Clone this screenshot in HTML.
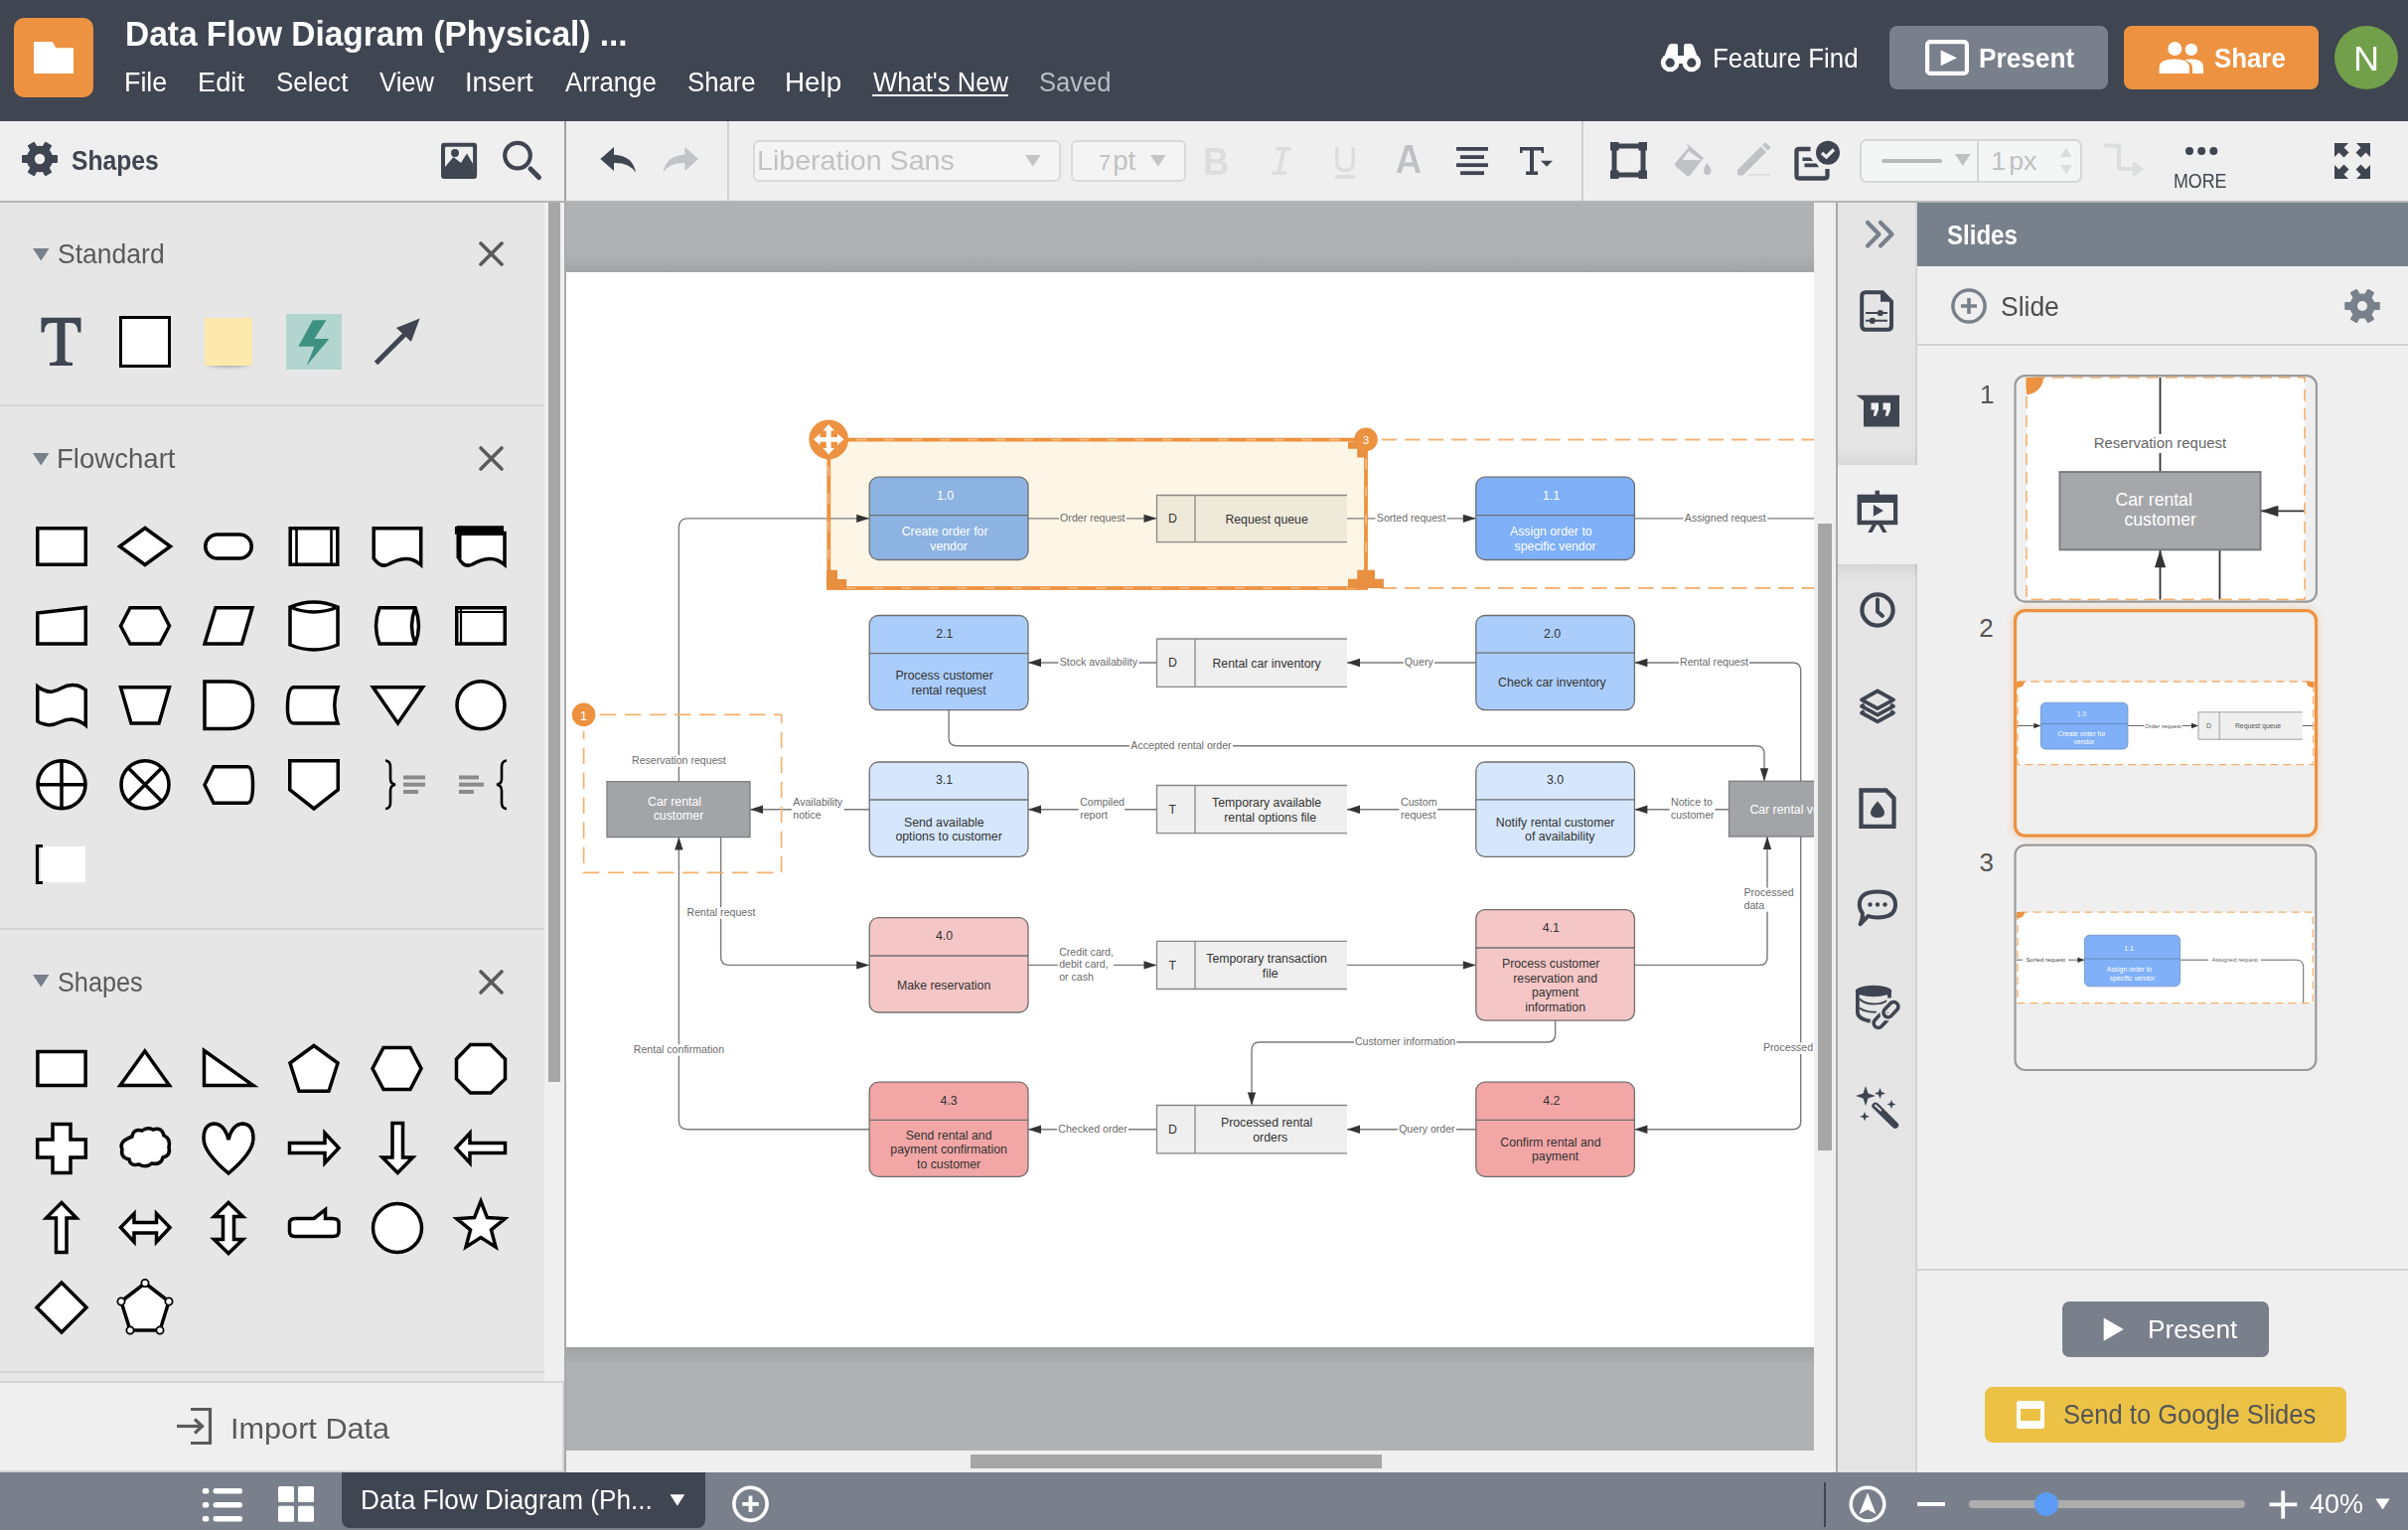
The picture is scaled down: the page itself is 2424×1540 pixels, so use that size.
<!DOCTYPE html>
<html><head><meta charset="utf-8">
<style>
*{box-sizing:border-box;margin:0;padding:0}
html,body{width:2424px;height:1540px;overflow:hidden;background:#efefef;font-family:"Liberation Sans",sans-serif;position:relative}
.a{position:absolute}
.t{position:absolute;white-space:nowrap;line-height:1;transform-origin:0 0;font-family:"Liberation Sans",sans-serif}
svg{overflow:visible}
</style></head><body>
<div class="a" style="left:0px;top:0px;width:2424px;height:122px;background:#3f4551;"></div><div class="a" style="left:14px;top:18px;width:80px;height:80px;background:#ed9240;border-radius:10px"></div><svg class="a" style="left:34px;top:41px;" width="41" height="34" viewBox="0 0 41 34"><path d="M0 0.9H18.8L22.3 7.2H40V32.9H0Z" fill="#fff"/></svg><div class="t" style="left:125.73px;top:16.86px;font-size:34.30px;color:#fff;font-weight:bold;transform:scaleX(0.9753);">Data Flow Diagram (Physical) ...</div><div class="t" style="left:125.05px;top:68.32px;font-size:28.20px;color:#fff;transform:scaleX(0.9528);">File</div><div class="t" style="left:199.22px;top:68.32px;font-size:28.20px;color:#fff;transform:scaleX(0.9673);">Edit</div><div class="t" style="left:278.03px;top:68.32px;font-size:28.20px;color:#fff;transform:scaleX(0.9239);">Select</div><div class="t" style="left:381.87px;top:68.32px;font-size:28.20px;color:#fff;transform:scaleX(0.9093);">View</div><div class="t" style="left:468.23px;top:68.32px;font-size:28.20px;color:#fff;transform:scaleX(0.9731);">Insert</div><div class="t" style="left:568.90px;top:68.32px;font-size:28.20px;color:#fff;transform:scaleX(0.9153);">Arrange</div><div class="t" style="left:691.54px;top:68.32px;font-size:28.20px;color:#fff;transform:scaleX(0.9130);">Share</div><div class="t" style="left:789.78px;top:68.32px;font-size:28.20px;color:#fff;transform:scaleX(0.9859);">Help</div><div class="t" style="left:878.57px;top:68.32px;font-size:28.20px;color:#fff;transform:scaleX(0.9093);">What&#x27;s New</div><div class="a" style="left:878px;top:95px;width:137px;height:2px;background:#fff;"></div><div class="t" style="left:1046.35px;top:68.32px;font-size:28.20px;color:#b9bdc3;transform:scaleX(0.9083);">Saved</div><svg class="a" style="left:1672px;top:44px;" width="40" height="29" viewBox="0 0 40 29"><g fill="#fff">
<path d="M3 14 L7 3 Q8 0 11 0 H15 Q17 0 17 3 V12 H23 V3 Q23 0 25 0 H29 Q32 0 33 3 L37 14 Z"/>
<circle cx="9.2" cy="19" r="9.3"/><circle cx="30.8" cy="19" r="9.3"/>
<rect x="14" y="14" width="12" height="6"/></g>
<g fill="#3f4551"><circle cx="9.2" cy="19.2" r="4.6"/><circle cx="30.8" cy="19.2" r="4.6"/></g></svg><div class="t" style="left:1724.33px;top:44.63px;font-size:27.60px;color:#fff;transform:scaleX(0.9371);">Feature Find</div><div class="a" style="left:1902px;top:26px;width:220px;height:64px;background:#79808b;border-radius:8px"></div><svg class="a" style="left:1938px;top:40px;" width="44" height="36" viewBox="0 0 44 36"><rect x="2.1" y="2.1" width="39.8" height="31.8" rx="3" fill="none" stroke="#fff" stroke-width="4.2"/><path d="M15.7 10.4 L32 18.3 L15.7 26.3Z" fill="#fff"/></svg><div class="t" style="left:1992.10px;top:45.19px;font-size:27.30px;color:#fff;font-weight:bold;transform:scaleX(0.9601);">Present</div><div class="a" style="left:2138px;top:26px;width:196px;height:64px;background:#ed9240;border-radius:8px"></div><svg class="a" style="left:2173px;top:41px;" width="46" height="34" viewBox="0 0 46 34"><g fill="#fff"><circle cx="16.3" cy="8" r="7"/><circle cx="32.9" cy="8.9" r="6.2"/>
<path d="M0.6 33 V27 Q0.6 18.6 16 18.6 Q30.5 18.6 31 27 V33Z"/>
<path d="M26 19.2 Q29 18.6 33 18.6 Q45 18.6 45 27 V33 H34 V27 Q34 22 26 19.2Z"/></g></svg><div class="t" style="left:2228.53px;top:45.19px;font-size:27.30px;color:#fff;font-weight:bold;transform:scaleX(0.9458);">Share</div><div class="a" style="left:2350px;top:26px;width:64px;height:64px;border-radius:50%;background:#72a04a"></div><div class="t" style="left:2368.91px;top:42.13px;font-size:34.80px;color:#fff;transform:scaleX(1.0365);">N</div><div class="a" style="left:0px;top:122px;width:2424px;height:80px;background:#efefef;"></div><div class="a" style="left:0px;top:202px;width:2424px;height:2px;background:#b5b5b5;"></div><svg class="a" style="left:0px;top:122px;" width="80" height="80" viewBox="0 0 80 80"><g transform="translate(40,38)" fill="#3f4551"><rect x="-4.0" y="-18" width="8" height="36" rx="1" transform="rotate(90.0)"/><rect x="-4.0" y="-18" width="8" height="36" rx="1" transform="rotate(150.0)"/><rect x="-4.0" y="-18" width="8" height="36" rx="1" transform="rotate(210.0)"/><circle r="13.2"/><circle r="5.2" fill="#efefef"/></g></svg><div class="t" style="left:72.26px;top:148.29px;font-size:28.00px;color:#3f4551;font-weight:bold;transform:scaleX(0.8813);">Shapes</div><svg class="a" style="left:444px;top:143px;" width="37" height="37" viewBox="0 0 37 37"><rect x="0" y="0.7" width="36.1" height="36.4" rx="3" fill="#3f4551"/>
<rect x="4" y="4.7" width="28.1" height="26" rx="1" fill="#efefef"/>
<circle cx="14" cy="11" r="4" fill="#3f4551"/>
<path d="M4 25 L12.5 15 L20 21 L26 11.5 L32.1 22 V33 H4Z" fill="#3f4551"/></svg><svg class="a" style="left:504px;top:140px;" width="44" height="44" viewBox="0 0 44 44"><circle cx="17" cy="16.6" r="12.8" fill="none" stroke="#3f4551" stroke-width="4.2"/><line x1="30" y1="30" x2="38.5" y2="38.5" stroke="#3f4551" stroke-width="5" stroke-linecap="round"/></svg><div class="a" style="left:568px;top:122px;width:2px;height:80px;background:#a2a2a2;"></div><svg class="a" style="left:604px;top:148px;" width="37" height="27" viewBox="0 0 37 27"><path d="M0.4 12 L14 0 V7.8 Q33 8.5 36 25.9 Q30 15.6 14 16 V24Z" fill="#3f4551"/></svg><svg class="a" style="left:667px;top:148px;" width="37" height="27" viewBox="0 0 37 27"><g transform="translate(36.4,0) scale(-1,1)"><path d="M0.4 12 L14 0 V7.8 Q33 8.5 36 25.9 Q30 15.6 14 16 V24Z" fill="#c1c3c7"/></g></svg><div class="a" style="left:732px;top:122px;width:2px;height:80px;background:#d0d0d0;"></div><div class="a" style="left:758px;top:141px;width:310px;height:42px;background:#f4f4f4;border:2px solid #d9d9d9;border-radius:6px"></div><div class="t" style="left:761.71px;top:146.87px;font-size:28.50px;color:#c2c2c2;transform:scaleX(1.0036);">Liberation Sans</div><svg class="a" style="left:1032px;top:156px;" width="16" height="12" viewBox="0 0 16 12"><path d="M0 0H15.5L7.75 11.8Z" fill="#c4c4c4"/></svg><div class="a" style="left:1078px;top:141px;width:116px;height:42px;background:#f4f4f4;border:2px solid #d9d9d9;border-radius:6px"></div><div class="t" style="left:1105.90px;top:152.87px;font-size:22.00px;color:#c2c2c2;">7</div><div class="t" style="left:1120.21px;top:148.22px;font-size:27.50px;color:#c2c2c2;">pt</div><svg class="a" style="left:1158px;top:156px;" width="16" height="12" viewBox="0 0 16 12"><path d="M0 0H15.5L7.75 11.8Z" fill="#c4c4c4"/></svg><div class="t" style="left:1211.43px;top:142.98px;font-size:39.00px;color:#dcdddd;font-weight:bold;transform:scaleX(0.9332);">B</div><svg class="a" style="left:1280px;top:148px;" width="20" height="28" viewBox="0 0 20 28"><path d="M4.5 0H19.8V3.5H14.2L9.5 24.5H15V28H0V24.5H5.4L10.1 3.5H4.5Z" fill="#dcdddd"/></svg><svg class="a" style="left:1344px;top:148px;" width="21" height="32" viewBox="0 0 21 32"><path d="M1.7 0V14.5Q1.7 23.5 10 23.5Q18.3 23.5 18.3 14.5V0" fill="none" stroke="#dcdddd" stroke-width="3.4"/><rect x="0" y="28" width="20" height="3.7" fill="#dcdddd"/></svg><svg class="a" style="left:1406px;top:146px;" width="24" height="28" viewBox="0 0 24 28"><path d="M8.6 0H15.4L24 28H19.2L17.3 21.5H6.7L4.8 28H0ZM12 4.5L7.9 17.4H16.1Z" fill="#bfc1c5"/></svg><svg class="a" style="left:1466px;top:148px;" width="33" height="29" viewBox="0 0 33 29"><g fill="#3f4551"><rect x="0" y="0" width="32" height="3.8"/><rect x="4" y="8.2" width="24" height="3.8"/><rect x="0" y="16.3" width="32" height="3.8"/><rect x="4" y="24.3" width="24" height="3.8"/></g></svg><svg class="a" style="left:1530px;top:148px;" width="34" height="29" viewBox="0 0 34 29"><path d="M0 0H24V6H21.5V3.5H14V24.5H18V28H6V24.5H10V3.5H2.5V6H0Z" fill="#3f4551"/><path d="M21 13.8H33L27 19.8Z" fill="#3f4551"/></svg><div class="a" style="left:1592px;top:122px;width:2px;height:80px;background:#d0d0d0;"></div><svg class="a" style="left:1621px;top:143px;" width="38" height="38" viewBox="0 0 38 38"><rect x="4" y="4" width="29" height="29" fill="none" stroke="#3f4551" stroke-width="5"/><g fill="#3f4551"><rect x="0" y="0" width="8.5" height="8.5"/><rect x="28.5" y="0" width="8.5" height="8.5"/><rect x="0" y="28.5" width="8.5" height="8.5"/><rect x="28.5" y="28.5" width="8.5" height="8.5"/></g></svg><svg class="a" style="left:1686px;top:144px;" width="38" height="35" viewBox="0 0 38 35"><path d="M12 0.5 L29 15 L15.5 32 Q14 34.5 11.5 32.5 L1 23.5 Q-0.5 21.5 1 19.5 L13.5 4.5Z" fill="#bfc1c5"/><path d="M7.5 17 L26.5 17.3 L14 8Z" fill="#efefef"/><path d="M32 20 Q37 26 36.5 28.5 Q36 32 32.5 32 Q29.5 32 29 28.5 Q29 26 32 20Z" fill="#bfc1c5"/></svg><svg class="a" style="left:1749px;top:145px;" width="34" height="32" viewBox="0 0 34 32"><path d="M0 26 L23.5 2.5 L29 8 L5.5 31.5 H0Z" fill="#bfc1c5"/><path d="M25 1 L27 -1 Q28 -2 29 -1 L32.5 2.5 Q33.5 3.5 32.5 4.5 L30.5 6.5Z" fill="#bfc1c5"/><rect x="11" y="30" width="22" height="1.8" fill="#dcdddd"/></svg><svg class="a" style="left:1807px;top:141px;" width="46" height="40" viewBox="0 0 46 40"><path d="M15.5 9 H4 Q1.5 9 1.5 11.5 V36 Q1.5 38.5 4 38.5 H30 Q32.5 38.5 32.5 36 V29" fill="none" stroke="#3f4551" stroke-width="4.3"/><g fill="#3f4551"><path d="M7.5 17.5H15.5L18 21H7.5Z"/><path d="M9.5 23.6H21.5L24 27.3H9.5Z"/></g><circle cx="33" cy="12.8" r="12" fill="#3f4551"/><path d="M27 13 L31.5 17 L39 9.5" fill="none" stroke="#efefef" stroke-width="3.4"/></svg><div class="a" style="left:1872px;top:140px;width:224px;height:44px;background:#f4f5f5;border:2px solid #d6d6d6;border-radius:7px"></div><div class="a" style="left:1990px;top:142px;width:2px;height:40px;background:#d6d6d6;"></div><div class="a" style="left:1894px;top:159.5px;width:61px;height:4px;background:#b9b9b9;border-radius:2px"></div><svg class="a" style="left:1968px;top:155px;" width="16" height="13" viewBox="0 0 16 13"><path d="M0 0H15.7L7.85 12Z" fill="#c0c0c0"/></svg><div class="t" style="left:2004.20px;top:149.19px;font-size:26.70px;color:#c0c0c0;">1</div><div class="t" style="left:2022.26px;top:149.19px;font-size:26.70px;color:#c0c0c0;">px</div><svg class="a" style="left:2074px;top:148px;" width="12" height="28" viewBox="0 0 12 28"><path d="M0 10 L6 0.4 L11.5 10Z M0 18 H11.5 L6 27.4Z" fill="#dcdddd"/></svg><svg class="a" style="left:2118px;top:144px;" width="41" height="34" viewBox="0 0 41 34"><path d="M0 2.5 H13 Q15 2.5 15 4.5 V24 Q15 26 17 26 H31" fill="none" stroke="#dcdddd" stroke-width="4"/><path d="M29 18 L40.5 26 L29 34Z" fill="#dcdddd"/></svg><svg class="a" style="left:2199px;top:147px;" width="34" height="10" viewBox="0 0 34 10"><g fill="#3f4551"><circle cx="5" cy="5" r="4"/><circle cx="17.2" cy="5" r="4"/><circle cx="29.3" cy="5" r="4"/></g></svg><div class="t" style="left:2187.77px;top:173.37px;font-size:19.40px;color:#3f4551;transform:scaleX(0.9182);">MORE</div><svg class="a" style="left:2350px;top:144px;" width="37" height="37" viewBox="0 0 37 37"><g fill="#3f4551"><path d="M0 0H14L9.5 4.5L14.5 9.5L9.5 14.5L4.5 9.5L0 14Z"/><path d="M36 0H22L26.5 4.5L21.5 9.5L26.5 14.5L31.5 9.5L36 14Z"/><path d="M0 36H14L9.5 31.5L14.5 26.5L9.5 21.5L4.5 26.5L0 22Z"/><path d="M36 36H22L26.5 31.5L21.5 26.5L26.5 21.5L31.5 26.5L36 22Z"/></g></svg><div class="a" style="left:0px;top:204px;width:548px;height:1187px;background:#e6e6e6;"></div><div class="a" style="left:548px;top:204px;width:20px;height:1187px;background:#efefef;"></div><div class="a" style="left:552px;top:204px;width:12px;height:885px;background:#a6a6a6;"></div><div class="a" style="left:568px;top:204px;width:2px;height:1278px;background:#a9a9a9;"></div><div class="a" style="left:0px;top:1390px;width:568px;height:92px;background:#efefef;border-top:2px solid #d5d5d5;border-right:2px solid #d5d5d5;border-bottom:2px solid #d5d5d5"></div><div class="a" style="left:0px;top:407px;width:548px;height:2px;background:#d3d3d3;"></div><div class="a" style="left:0px;top:934px;width:548px;height:2px;background:#d3d3d3;"></div><div class="a" style="left:0px;top:1380px;width:548px;height:2px;background:#d3d3d3;"></div><svg class="a" style="left:33px;top:249.8px;" width="17" height="13" viewBox="0 0 17 13"><path d="M0 0H16.5L8.25 12.5Z" fill="#78808b"/></svg><div class="t" style="left:57.81px;top:242.09px;font-size:28.00px;color:#5a5a5a;transform:scaleX(0.9476);">Standard</div><svg class="a" style="left:482px;top:243px;" width="25" height="25" viewBox="0 0 25 25"><path d="M2 2L23 23M23 2L2 23" stroke="#5a5a5a" stroke-width="3.6" stroke-linecap="round"/></svg><svg class="a" style="left:33px;top:455.5px;" width="17" height="13" viewBox="0 0 17 13"><path d="M0 0H16.5L8.25 12.5Z" fill="#78808b"/></svg><div class="t" style="left:56.80px;top:447.99px;font-size:28.00px;color:#5a5a5a;transform:scaleX(0.9844);">Flowchart</div><svg class="a" style="left:482px;top:449px;" width="25" height="25" viewBox="0 0 25 25"><path d="M2 2L23 23M23 2L2 23" stroke="#5a5a5a" stroke-width="3.6" stroke-linecap="round"/></svg><svg class="a" style="left:33px;top:981.3px;" width="17" height="13" viewBox="0 0 17 13"><path d="M0 0H16.5L8.25 12.5Z" fill="#78808b"/></svg><div class="t" style="left:57.86px;top:974.89px;font-size:28.00px;color:#5a5a5a;transform:scaleX(0.9031);">Shapes</div><svg class="a" style="left:482px;top:976px;" width="25" height="25" viewBox="0 0 25 25"><path d="M2 2L23 23M23 2L2 23" stroke="#5a5a5a" stroke-width="3.6" stroke-linecap="round"/></svg><svg class="a" style="left:41px;top:319px;" width="42" height="50" viewBox="0 0 42 50"><path d="M0.5 0.7H40.5V15.5H37.5Q37.5 6 30 6H24.5V43Q24.5 46 32 46V49H9V46Q16.5 46 16.5 43V6H11Q3.5 6 3.5 15.5H0.5Z" fill="#3f4551"/></svg><div class="a" style="left:120px;top:318px;width:52px;height:52px;background:#fff;border:3.8px solid #000"></div><div class="a" style="left:209px;top:362px;width:42px;height:7px;border-radius:50%;background:rgba(0,0,0,0.35);filter:blur(2px)"></div><div class="a" style="left:206px;top:320px;width:48px;height:48px;background:#fde9ab;"></div><div class="a" style="left:288px;top:316px;width:56px;height:56px;background:#b2d5d0;"></div><svg class="a" style="left:288px;top:316px;" width="56" height="56" viewBox="0 0 56 56"><path d="M26.8 6.2H40.4L28.5 25H43.4L20.7 52L28.5 32.8H12.3Z" fill="#3e9181"/></svg><svg class="a" style="left:370px;top:315px;" width="56" height="56" viewBox="0 0 56 56"><path d="M8.5 50.4 L38 21" stroke="#3f4551" stroke-width="5"/><path d="M52.6 5.6 L28.9 15 L43.9 29Z" fill="#3f4551"/></svg><svg class="a" style="left:0px;top:500px;" width="548" height="880" viewBox="0 500 548 880"><path d="M37.75 531.75H86.25V568.25H37.75Z" fill="#fff" stroke="#000" stroke-width="3.5" stroke-linejoin="miter" /><path d="M146 531.5L171.5 550L146 568.5L120.5 550Z" fill="#fff" stroke="#000" stroke-width="3.5" stroke-linejoin="miter" /><rect x="206.75" y="538" width="46.5" height="24" rx="12" fill="#fff" stroke="#000" stroke-width="3.5" stroke-linejoin="miter"/><path d="M292.2 531.75H339.8V568.25H292.2Z" fill="#fff" stroke="#000" stroke-width="3.5" stroke-linejoin="miter" /><path d="M298.5 532V568M333.5 532V568" stroke="#000" stroke-width="2.6"/><path d="M376.2 531.75H423.7V568.5Q416 562 408.3 562.5Q400 563 391 568Q383 572 376.2 562Z" fill="#fff" stroke="#000" stroke-width="3.5" stroke-linejoin="miter" /><path d="M459.7 531.7H504.5V536.5H508V568.5Q500.5 562 492.5 562.5Q484 563 475.5 568Q467 572 462 562V536H459.7Z" fill="#fff" stroke="#000" stroke-width="3.5"/><path d="M459.7 531.7H504.5V536.5H462V562" fill="none" stroke="#000" stroke-width="5"/><path d="M37.75 617L86.25 611.5V648H37.75Z" fill="#fff" stroke="#000" stroke-width="3.5" stroke-linejoin="miter" /><path d="M131 611.75H161L170.5 630L161 648H131L121.5 630Z" fill="#fff" stroke="#000" stroke-width="3.5" stroke-linejoin="miter" /><path d="M217 611.75H254L243.5 648H206Z" fill="#fff" stroke="#000" stroke-width="3.5" stroke-linejoin="miter" /><path d="M292 611Q316 601 340 611V649Q316 659 292 649Z" fill="#fff" stroke="#000" stroke-width="3.5" stroke-linejoin="miter" /><path d="M292 611Q316 621 340 611" fill="none" stroke="#000" stroke-width="3.5"/><path d="M382 611.75H418Q425 630 418 648H382Q375 630 382 611.75Z" fill="#fff" stroke="#000" stroke-width="3.5" stroke-linejoin="miter" /><path d="M418 611.75Q411 630 418 648" fill="none" stroke="#000" stroke-width="3.5"/><path d="M459.75 611.75H508.25V648H459.75Z" fill="#fff" stroke="#000" stroke-width="3.5" stroke-linejoin="miter" /><path d="M464 612V648M460 616H508" stroke="#000" stroke-width="2.2"/><path d="M37.75 691Q46 697 53 696Q58 695 62 692.5Q70 688 78 690Q83 691.5 86.25 694.5V730Q80 725 72 724Q66 724 60 727Q52 731 45 729Q40 728 37.75 726Z" fill="#fff" stroke="#000" stroke-width="3.5" stroke-linejoin="miter" /><path d="M121.5 691.75H170.5L160 728H132Z" fill="#fff" stroke="#000" stroke-width="3.5" stroke-linejoin="miter" /><path d="M206 686H230Q254.5 686 254.5 709.75Q254.5 733.5 230 733.5H206Z" fill="#fff" stroke="#000" stroke-width="3.5" stroke-linejoin="miter" /><path d="M296 691.75H340Q333.5 710 340 728H296Q289 728 289.5 710Q290 691.75 296 691.75Z" fill="#fff" stroke="#000" stroke-width="3.5" stroke-linejoin="miter" /><path d="M375.5 691.75H425.5L400.5 728Z" fill="#fff" stroke="#000" stroke-width="3.5" stroke-linejoin="miter" /><circle cx="484" cy="709.75" r="24" fill="#fff" stroke="#000" stroke-width="3.5" stroke-linejoin="miter"/><circle cx="62" cy="789.75" r="24" fill="#fff" stroke="#000" stroke-width="3.5" stroke-linejoin="miter"/><path d="M62 766V814M38 789.75H86" stroke="#000" stroke-width="3.5"/><circle cx="146" cy="789.75" r="24" fill="#fff" stroke="#000" stroke-width="3.5" stroke-linejoin="miter"/><path d="M129 772.8L163 806.7M163 772.8L129 806.7" stroke="#000" stroke-width="3.5"/><path d="M206 790L215 771.75H249Q254.5 771.75 254.5 790Q254.5 808.25 249 808.25H215Z" fill="#fff" stroke="#000" stroke-width="3.5" stroke-linejoin="miter" /><path d="M291.75 765.75H340.25V795L316 814L291.75 795Z" fill="#fff" stroke="#000" stroke-width="3.5" stroke-linejoin="miter" /><path d="M388 765.5Q393 766 393 772V784Q393 789 398 789.75Q393 790.5 393 796V808Q393 814 388 814" fill="none" stroke="#000" stroke-width="2.6"/><g fill="#8b8b8b"><rect x="406" y="780.5" width="22" height="4"/><rect x="406" y="787.7" width="22" height="4"/><rect x="406" y="795" width="15" height="4"/></g><path d="M510 765.5Q505 766 505 772V784Q505 789 500 789.75Q505 790.5 505 796V808Q505 814 510 814" fill="none" stroke="#000" stroke-width="2.6"/><g fill="#8b8b8b"><rect x="462" y="780.5" width="20" height="4"/><rect x="462" y="787.7" width="25" height="4"/><rect x="462" y="795" width="15" height="4"/></g><rect x="41" y="852" width="45" height="36" fill="#fff"/><path d="M43 851.5H37.5V888.5H43" fill="none" stroke="#000" stroke-width="3.2"/><path d="M37.9 1058.5H86.1V1092.5H37.9Z" fill="#fff" stroke="#000" stroke-width="3.5" stroke-linejoin="miter" /><path d="M145.8 1058L170.5 1092.6H121Z" fill="#fff" stroke="#000" stroke-width="3.5" stroke-linejoin="miter" /><path d="M205.5 1057.5V1092.6H255Z" fill="#fff" stroke="#000" stroke-width="3.5" stroke-linejoin="miter" /><path d="M316 1052.5L340 1070L331 1098.3H301L292 1070Z" fill="#fff" stroke="#000" stroke-width="3.5" stroke-linejoin="miter" /><path d="M386 1054.5H413L424 1075.5L413 1096.5H386L375 1075.5Z" fill="#fff" stroke="#000" stroke-width="3.5" stroke-linejoin="miter" /><path d="M473.5 1051.5H494L508.5 1066V1086L494 1100H473.5L459.5 1086V1066Z" fill="#fff" stroke="#000" stroke-width="3.5" stroke-linejoin="miter" /><path d="M53 1131.5H71V1147H86.3V1165H71V1180.5H53V1165H37.7V1147H53Z" fill="#fff" stroke="#000" stroke-width="3.5" stroke-linejoin="miter" /><path d="M133 1144Q134 1136 143 1138Q148 1134 154 1137Q163 1134 165 1143Q172 1146 170 1155Q172 1163 164 1165Q162 1173 153 1171Q147 1176 140 1172Q131 1174 130 1167Q121 1165 123 1157Q119 1149 133 1144Z" fill="#fff" stroke="#000" stroke-width="3.5" stroke-linejoin="miter" /><path d="M230 1147Q226 1131 215 1131Q205 1132 205 1146Q205 1160 230 1181Q255 1160 255 1146Q255 1132 245 1131Q234 1131 230 1147Z" fill="#fff" stroke="#000" stroke-width="3.5" stroke-linejoin="miter" /><path d="M291.5 1150.5H327V1140.5L341 1155.5L327 1170.5V1160.5H291.5Z" fill="#fff" stroke="#000" stroke-width="3.5" stroke-linejoin="miter" /><path d="M395 1130.5H405.5V1165H415.5L400.3 1180.5L385 1165H395Z" fill="#fff" stroke="#000" stroke-width="3.5" stroke-linejoin="miter" /><path d="M508.5 1150.5H473V1140.5L459 1155.5L473 1170.5V1160.5H508.5Z" fill="#fff" stroke="#000" stroke-width="3.5" stroke-linejoin="miter" /><path d="M56.5 1260.5H67V1226H77L62 1210.5L46.5 1226H56.5Z" fill="#fff" stroke="#000" stroke-width="3.5" stroke-linejoin="miter" /><path d="M121.5 1235.5L135 1221.5V1230.5H157.5V1221.5L171 1235.5L157.5 1250V1241H135V1250Z" fill="#fff" stroke="#000" stroke-width="3.5" stroke-linejoin="miter" /><path d="M230 1210.5L244.5 1224.5H235.5V1247.5H244.5L230 1261.5L215.5 1247.5H224.5V1224.5H215.5Z" fill="#fff" stroke="#000" stroke-width="3.5" stroke-linejoin="miter" /><path d="M297 1226.5H316L327.5 1217.5V1226.5H335Q341 1226.5 341 1231.5V1239.5Q341 1244.5 335 1244.5H297Q291.5 1244.5 291.5 1239.5V1231.5Q291.5 1226.5 297 1226.5Z" fill="#fff" stroke="#000" stroke-width="3.5" stroke-linejoin="miter" /><circle cx="400" cy="1236" r="24.5" fill="#fff" stroke="#000" stroke-width="3.5" stroke-linejoin="miter"/><path d="M484.00 1209.00L490.47 1225.60L508.25 1226.62L494.46 1237.90L498.99 1255.13L484.00 1245.50L469.01 1255.13L473.54 1237.90L459.75 1226.62L477.53 1225.60Z" fill="#fff" stroke="#000" stroke-width="3.5" stroke-linejoin="miter" /><path d="M62 1291L87 1316L62 1341L37 1316Z" fill="#fff" stroke="#000" stroke-width="3.5" stroke-linejoin="miter" /><path d="M146 1291.5L170 1310L161 1339L131 1339L122 1310Z" fill="#fff" stroke="#000" stroke-width="3.5" stroke-linejoin="miter" stroke-width="3"/><circle cx="146" cy="1291.5" r="3.6" fill="#fff" stroke="#000" stroke-width="1.8"/><circle cx="170" cy="1310" r="3.6" fill="#fff" stroke="#000" stroke-width="1.8"/><circle cx="161" cy="1339" r="3.6" fill="#fff" stroke="#000" stroke-width="1.8"/><circle cx="131" cy="1339" r="3.6" fill="#fff" stroke="#000" stroke-width="1.8"/><circle cx="122" cy="1310" r="3.6" fill="#fff" stroke="#000" stroke-width="1.8"/></svg><svg class="a" style="left:177px;top:1417px;" width="38" height="38" viewBox="0 0 38 38"><path d="M15 1.5H34.5V35.5H15" fill="none" stroke="#5a5a5a" stroke-width="3.2"/><path d="M1 18.5H24" stroke="#5a5a5a" stroke-width="3.2"/><path d="M19 11.5L26.5 18.5L19 25.5" fill="none" stroke="#5a5a5a" stroke-width="3.2"/></svg><div class="t" style="left:231.64px;top:1422.70px;font-size:30.00px;color:#5a5a5a;transform:scaleX(1.0217);">Import Data</div><div class="a" style="left:570px;top:204px;width:1256px;height:1256px;background:#b0b1b3;"></div><div class="a" style="left:570px;top:254px;width:1256px;height:20px;background:linear-gradient(#b0b1b3,#a3a4a6)"></div><div class="a" style="left:570px;top:1356px;width:1256px;height:18px;background:linear-gradient(#9fa0a2,#b0b1b3)"></div><div class="a" style="left:570px;top:274px;width:1256px;height:1082px;background:#fff;"></div><svg class="a" style="left:570px;top:204px;overflow:hidden" width="1256" height="1256" viewBox="570 204 1256 1256" font-family="Liberation Sans"><rect x="834" y="442.5" width="541" height="149.5" fill="#fdf6e6"/><path d="M683.4 786.7V530.85Q683.4 521.85 692.4 521.85H875.2" fill="none" stroke="#7a7a7a" stroke-width="1.4"/><path d="M875.2 521.85L862.2 517.65L862.2 526.0500000000001Z" fill="#333"/><path d="M1035 521.85H1164.5" fill="none" stroke="#7a7a7a" stroke-width="1.4"/><path d="M1164.5 521.85L1151.5 517.65L1151.5 526.0500000000001Z" fill="#333"/><path d="M1356 521.85H1485.8" fill="none" stroke="#7a7a7a" stroke-width="1.4"/><path d="M1485.8 521.85L1472.8 517.65L1472.8 526.0500000000001Z" fill="#333"/><path d="M1645.4 521.85H1826" fill="none" stroke="#7a7a7a" stroke-width="1.4"/><path d="M1645.4 667H1804.7Q1812.7 667 1812.7 675V1128.7Q1812.7 1136.7 1804.7 1136.7H1645.4" fill="none" stroke="#7a7a7a" stroke-width="1.4"/><path d="M1645.4 667L1658.4 662.8L1658.4 671.2Z" fill="#333"/><path d="M1645.4 1136.7L1658.4 1132.5L1658.4 1140.9Z" fill="#333"/><path d="M1485.8 667H1356" fill="none" stroke="#7a7a7a" stroke-width="1.4"/><path d="M1356 667L1369 662.8L1369 671.2Z" fill="#333"/><path d="M1164.5 667H1035" fill="none" stroke="#7a7a7a" stroke-width="1.4"/><path d="M1035 667L1048 662.8L1048 671.2Z" fill="#333"/><path d="M955.1 714.6V742.8Q955.1 750.8 963.1 750.8H1768Q1776 750.8 1776 758.8V786.3" fill="none" stroke="#7a7a7a" stroke-width="1.4"/><path d="M1776 786.3L1771.8 773.3L1780.2 773.3Z" fill="#333"/><path d="M1740.5 814.7H1645.4" fill="none" stroke="#7a7a7a" stroke-width="1.4"/><path d="M1645.4 814.7L1658.4 810.5L1658.4 818.9000000000001Z" fill="#333"/><path d="M1485.8 814.7H1356" fill="none" stroke="#7a7a7a" stroke-width="1.4"/><path d="M1356 814.7L1369 810.5L1369 818.9000000000001Z" fill="#333"/><path d="M1164.5 814.7H1035" fill="none" stroke="#7a7a7a" stroke-width="1.4"/><path d="M1035 814.7L1048 810.5L1048 818.9000000000001Z" fill="#333"/><path d="M875.2 814.7H755" fill="none" stroke="#7a7a7a" stroke-width="1.4"/><path d="M755 814.7L768 810.5L768 818.9000000000001Z" fill="#333"/><path d="M725.6 842.6V962.9Q725.6 971.4 734.1 971.4H875.2" fill="none" stroke="#7a7a7a" stroke-width="1.4"/><path d="M875.2 971.4L862.2 967.1999999999999L862.2 975.6Z" fill="#333"/><path d="M875.2 1136.7H691.9Q683.4 1136.7 683.4 1128.2V842.6" fill="none" stroke="#7a7a7a" stroke-width="1.4"/><path d="M683.4 842.6L679.1999999999999 855.6L687.6 855.6Z" fill="#333"/><path d="M1035 971.4H1164.5" fill="none" stroke="#7a7a7a" stroke-width="1.4"/><path d="M1164.5 971.4L1151.5 967.1999999999999L1151.5 975.6Z" fill="#333"/><path d="M1356 971.4H1485.8" fill="none" stroke="#7a7a7a" stroke-width="1.4"/><path d="M1485.8 971.4L1472.8 967.1999999999999L1472.8 975.6Z" fill="#333"/><path d="M1645.4 971.4H1771Q1779 971.4 1779 963.4V842" fill="none" stroke="#7a7a7a" stroke-width="1.4"/><path d="M1779 842L1774.8 855L1783.2 855Z" fill="#333"/><path d="M1565.6 1027.2V1041Q1565.6 1049 1557.6 1049H1268Q1260 1049 1260 1057V1112.5" fill="none" stroke="#7a7a7a" stroke-width="1.4"/><path d="M1260 1112.5L1255.8 1099.5L1264.2 1099.5Z" fill="#333"/><path d="M1485.8 1136.7H1356" fill="none" stroke="#7a7a7a" stroke-width="1.4"/><path d="M1356 1136.7L1369 1132.5L1369 1140.9Z" fill="#333"/><path d="M1164.5 1136.7H1035" fill="none" stroke="#7a7a7a" stroke-width="1.4"/><path d="M1035 1136.7L1048 1132.5L1048 1140.9Z" fill="#333"/><rect x="875.2" y="480.2" width="159.79999999999995" height="83.30000000000001" rx="9" fill="#8db3e2" stroke="#6f6f6f" stroke-width="1.3"/><line x1="875.2" y1="518.6" x2="1035" y2="518.6" stroke="#6f6f6f" stroke-width="1.3"/><text x="951.60" y="502.83" font-size="12.3" fill="#fff" text-anchor="middle" >1.0</text><text x="951.10" y="539.04" font-size="12.3" fill="#fff" text-anchor="middle" >Create order for</text><text x="955.10" y="553.64" font-size="12.3" fill="#fff" text-anchor="middle" >vendor</text><rect x="1485.8" y="480.2" width="159.60000000000014" height="83.30000000000001" rx="9" fill="#7fb0f8" stroke="#6f6f6f" stroke-width="1.3"/><line x1="1485.8" y1="518.6" x2="1645.4" y2="518.6" stroke="#6f6f6f" stroke-width="1.3"/><text x="1561.60" y="502.83" font-size="12.3" fill="#fff" text-anchor="middle" >1.1</text><text x="1561.30" y="539.04" font-size="12.3" fill="#fff" text-anchor="middle" >Assign order to</text><text x="1565.60" y="553.64" font-size="12.3" fill="#fff" text-anchor="middle" >specific vendor</text><rect x="875.2" y="619.5" width="159.79999999999995" height="95.10000000000002" rx="9" fill="#abcdfb" stroke="#6f6f6f" stroke-width="1.3"/><line x1="875.2" y1="657.6" x2="1035" y2="657.6" stroke="#6f6f6f" stroke-width="1.3"/><text x="950.70" y="641.98" font-size="12.3" fill="#333" text-anchor="middle" >2.1</text><text x="950.60" y="684.09" font-size="12.3" fill="#333" text-anchor="middle" >Process customer</text><text x="955.10" y="698.69" font-size="12.3" fill="#333" text-anchor="middle" >rental request</text><rect x="1485.8" y="619.5" width="159.60000000000014" height="95.10000000000002" rx="9" fill="#abcdfb" stroke="#6f6f6f" stroke-width="1.3"/><line x1="1485.8" y1="657.2" x2="1645.4" y2="657.2" stroke="#6f6f6f" stroke-width="1.3"/><text x="1562.50" y="641.78" font-size="12.3" fill="#333" text-anchor="middle" >2.0</text><text x="1562.40" y="691.19" font-size="12.3" fill="#333" text-anchor="middle" >Check car inventory</text><rect x="875.2" y="767" width="159.79999999999995" height="95.39999999999998" rx="9" fill="#d6e7fd" stroke="#6f6f6f" stroke-width="1.3"/><line x1="875.2" y1="805" x2="1035" y2="805" stroke="#6f6f6f" stroke-width="1.3"/><text x="950.50" y="789.43" font-size="12.3" fill="#333" text-anchor="middle" >3.1</text><text x="950.30" y="831.69" font-size="12.3" fill="#333" text-anchor="middle" >Send available</text><text x="955.10" y="846.29" font-size="12.3" fill="#333" text-anchor="middle" >options to customer</text><rect x="1485.8" y="767" width="159.60000000000014" height="95.39999999999998" rx="9" fill="#d6e7fd" stroke="#6f6f6f" stroke-width="1.3"/><line x1="1485.8" y1="804.8" x2="1645.4" y2="804.8" stroke="#6f6f6f" stroke-width="1.3"/><text x="1565.60" y="789.33" font-size="12.3" fill="#333" text-anchor="middle" >3.0</text><text x="1565.60" y="831.59" font-size="12.3" fill="#333" text-anchor="middle" >Notify rental customer</text><text x="1570.30" y="846.19" font-size="12.3" fill="#333" text-anchor="middle" >of availability</text><rect x="875.2" y="923.7" width="159.79999999999995" height="95.29999999999995" rx="9" fill="#f5c6c6" stroke="#6f6f6f" stroke-width="1.3"/><line x1="875.2" y1="962" x2="1035" y2="962" stroke="#6f6f6f" stroke-width="1.3"/><text x="950.60" y="946.28" font-size="12.3" fill="#333" text-anchor="middle" >4.0</text><text x="950.10" y="995.79" font-size="12.3" fill="#333" text-anchor="middle" >Make reservation</text><rect x="1485.8" y="915.6" width="159.60000000000014" height="111.60000000000002" rx="9" fill="#f5c6c6" stroke="#6f6f6f" stroke-width="1.3"/><line x1="1485.8" y1="954" x2="1645.4" y2="954" stroke="#6f6f6f" stroke-width="1.3"/><text x="1561.20" y="938.23" font-size="12.3" fill="#333" text-anchor="middle" >4.1</text><text x="1561.20" y="973.99" font-size="12.3" fill="#333" text-anchor="middle" >Process customer</text><text x="1565.60" y="988.59" font-size="12.3" fill="#333" text-anchor="middle" >reservation and</text><text x="1565.60" y="1003.19" font-size="12.3" fill="#333" text-anchor="middle" >payment</text><text x="1565.60" y="1017.79" font-size="12.3" fill="#333" text-anchor="middle" >information</text><rect x="875.2" y="1089.2" width="159.79999999999995" height="95.09999999999991" rx="9" fill="#f2a6a6" stroke="#6f6f6f" stroke-width="1.3"/><line x1="875.2" y1="1127.4" x2="1035" y2="1127.4" stroke="#6f6f6f" stroke-width="1.3"/><text x="955.10" y="1111.73" font-size="12.3" fill="#333" text-anchor="middle" >4.3</text><text x="955.10" y="1146.54" font-size="12.3" fill="#333" text-anchor="middle" >Send rental and</text><text x="955.10" y="1161.14" font-size="12.3" fill="#333" text-anchor="middle" >payment confirmation</text><text x="955.10" y="1175.74" font-size="12.3" fill="#333" text-anchor="middle" >to customer</text><rect x="1485.8" y="1089.2" width="159.60000000000014" height="95.09999999999991" rx="9" fill="#f2a6a6" stroke="#6f6f6f" stroke-width="1.3"/><line x1="1485.8" y1="1127.3" x2="1645.4" y2="1127.3" stroke="#6f6f6f" stroke-width="1.3"/><text x="1561.90" y="1111.68" font-size="12.3" fill="#333" text-anchor="middle" >4.2</text><text x="1560.90" y="1153.79" font-size="12.3" fill="#333" text-anchor="middle" >Confirm rental and</text><text x="1565.60" y="1168.39" font-size="12.3" fill="#333" text-anchor="middle" >payment</text><rect x="1164.5" y="498.5" width="191.5" height="47.10000000000002" fill="#efe9da"/><path d="M1356 498.5H1164.5V545.6H1356M1203 498.5V545.6" fill="none" stroke="#888" stroke-width="1.3"/><text x="1180.35" y="526.28" font-size="12.3" fill="#333" text-anchor="middle" >D</text><text x="1275.10" y="526.97" font-size="12.3" fill="#333" text-anchor="middle" >Request queue</text><rect x="1164.5" y="643" width="191.5" height="48.39999999999998" fill="#efefef"/><path d="M1356 643H1164.5V691.4H1356M1203 643V691.4" fill="none" stroke="#888" stroke-width="1.3"/><text x="1180.35" y="671.43" font-size="12.3" fill="#333" text-anchor="middle" >D</text><text x="1275.10" y="672.12" font-size="12.3" fill="#333" text-anchor="middle" >Rental car inventory</text><rect x="1164.5" y="790.5" width="191.5" height="48.10000000000002" fill="#efefef"/><path d="M1356 790.5H1164.5V838.6H1356M1203 790.5V838.6" fill="none" stroke="#888" stroke-width="1.3"/><text x="1180.35" y="818.78" font-size="12.3" fill="#333" text-anchor="middle" >T</text><text x="1275.10" y="812.17" font-size="12.3" fill="#333" text-anchor="middle" >Temporary available</text><text x="1278.70" y="826.77" font-size="12.3" fill="#333" text-anchor="middle" >rental options file</text><rect x="1164.5" y="947.4" width="191.5" height="48.10000000000002" fill="#efefef"/><path d="M1356 947.4H1164.5V995.5H1356M1203 947.4V995.5" fill="none" stroke="#888" stroke-width="1.3"/><text x="1180.35" y="975.68" font-size="12.3" fill="#333" text-anchor="middle" >T</text><text x="1275.10" y="969.07" font-size="12.3" fill="#333" text-anchor="middle" >Temporary transaction</text><text x="1278.70" y="983.67" font-size="12.3" fill="#333" text-anchor="middle" >file</text><rect x="1164.5" y="1112.5" width="191.5" height="48.299999999999955" fill="#efefef"/><path d="M1356 1112.5H1164.5V1160.8H1356M1203 1112.5V1160.8" fill="none" stroke="#888" stroke-width="1.3"/><text x="1180.35" y="1140.88" font-size="12.3" fill="#333" text-anchor="middle" >D</text><text x="1275.10" y="1134.27" font-size="12.3" fill="#333" text-anchor="middle" >Processed rental</text><text x="1278.70" y="1148.87" font-size="12.3" fill="#333" text-anchor="middle" >orders</text><rect x="611" y="786.7" width="144" height="55.9" fill="#a3a4a8" stroke="#7d7d7d" stroke-width="1.3"/><text x="679.00" y="810.50" font-size="12.3" fill="#fff" text-anchor="middle" >Car rental</text><text x="683.00" y="824.70" font-size="12.3" fill="#fff" text-anchor="middle" >customer</text><rect x="1740.5" y="786.3" width="100" height="55.7" fill="#a3a4a8" stroke="#7d7d7d" stroke-width="1.3"/><text x="1761.40" y="818.50" font-size="12.3" fill="#fff" text-anchor="start" >Car rental vendor</text><rect x="634.94" y="760.17" width="96.92" height="11.50" fill="#fff"/><text x="683.40" y="768.67" font-size="10.6" fill="#6b6b6b" text-anchor="middle" >Reservation request</text><rect x="1065.89" y="516.32" width="67.82" height="11.50" fill="#fdf6e6"/><text x="1099.80" y="524.82" font-size="10.6" fill="#6b6b6b" text-anchor="middle" >Order request</text><rect x="1384.62" y="516.32" width="71.95" height="11.50" fill="#fff"/><text x="1420.60" y="524.82" font-size="10.6" fill="#6b6b6b" text-anchor="middle" >Sorted request</text><rect x="1694.38" y="516.32" width="84.83" height="11.50" fill="#fff"/><text x="1736.80" y="524.82" font-size="10.6" fill="#6b6b6b" text-anchor="middle" >Assigned request</text><rect x="1690.00" y="661.47" width="71.00" height="11.50" fill="#fff"/><text x="1725.50" y="669.97" font-size="10.6" fill="#6b6b6b" text-anchor="middle" >Rental request</text><rect x="1774.23" y="1049.47" width="51.55" height="11.50" fill="#fff"/><text x="1800.00" y="1057.97" font-size="10.6" fill="#6b6b6b" text-anchor="middle" >Processed</text><rect x="1412.60" y="661.47" width="31.41" height="11.50" fill="#fff"/><text x="1428.30" y="669.97" font-size="10.6" fill="#6b6b6b" text-anchor="middle" >Query</text><rect x="1065.47" y="661.47" width="80.86" height="11.50" fill="#fff"/><text x="1105.90" y="669.97" font-size="10.6" fill="#6b6b6b" text-anchor="middle" >Stock availability</text><rect x="1136.91" y="745.27" width="104.18" height="11.50" fill="#fff"/><text x="1189.00" y="753.77" font-size="10.6" fill="#6b6b6b" text-anchor="middle" >Accepted rental order</text><rect x="1680.50" y="802.87" width="45.98" height="24.10" fill="#fff"/><text x="1682.00" y="811.37" font-size="10.6" fill="#6b6b6b" text-anchor="start" >Notice to</text><text x="1682.00" y="823.97" font-size="10.6" fill="#6b6b6b" text-anchor="start" >customer</text><rect x="1408.50" y="802.87" width="38.30" height="24.10" fill="#fff"/><text x="1410.00" y="811.37" font-size="10.6" fill="#6b6b6b" text-anchor="start" >Custom</text><text x="1410.00" y="823.97" font-size="10.6" fill="#6b6b6b" text-anchor="start" >request</text><rect x="1085.70" y="802.87" width="46.57" height="24.10" fill="#fff"/><text x="1087.20" y="811.37" font-size="10.6" fill="#6b6b6b" text-anchor="start" >Compiled</text><text x="1087.20" y="823.97" font-size="10.6" fill="#6b6b6b" text-anchor="start" >report</text><rect x="796.80" y="802.87" width="52.87" height="24.10" fill="#fff"/><text x="798.30" y="811.37" font-size="10.6" fill="#6b6b6b" text-anchor="start" >Availability</text><text x="798.30" y="823.97" font-size="10.6" fill="#6b6b6b" text-anchor="start" >notice</text><rect x="690.50" y="913.27" width="71.00" height="11.50" fill="#fff"/><text x="726.00" y="921.77" font-size="10.6" fill="#6b6b6b" text-anchor="middle" >Rental request</text><rect x="637.01" y="1051.17" width="92.78" height="11.50" fill="#fff"/><text x="683.40" y="1059.67" font-size="10.6" fill="#6b6b6b" text-anchor="middle" >Rental confirmation</text><rect x="1064.70" y="953.27" width="56.32" height="36.70" fill="#fff"/><text x="1066.20" y="961.77" font-size="10.6" fill="#6b6b6b" text-anchor="start" >Credit card,</text><text x="1066.20" y="974.37" font-size="10.6" fill="#6b6b6b" text-anchor="start" >debit card,</text><text x="1066.20" y="986.97" font-size="10.6" fill="#6b6b6b" text-anchor="start" >or cash</text><rect x="1754.00" y="893.57" width="51.55" height="24.10" fill="#fff"/><text x="1755.50" y="902.07" font-size="10.6" fill="#6b6b6b" text-anchor="start" >Processed</text><text x="1755.50" y="914.67" font-size="10.6" fill="#6b6b6b" text-anchor="start" >data</text><rect x="1363.04" y="1043.47" width="103.12" height="11.50" fill="#fff"/><text x="1414.60" y="1051.97" font-size="10.6" fill="#6b6b6b" text-anchor="middle" >Customer information</text><rect x="1406.94" y="1131.17" width="58.91" height="11.50" fill="#fff"/><text x="1436.40" y="1139.67" font-size="10.6" fill="#6b6b6b" text-anchor="middle" >Query order</text><rect x="1064.10" y="1131.17" width="71.79" height="11.50" fill="#fff"/><text x="1100.00" y="1139.67" font-size="10.6" fill="#6b6b6b" text-anchor="middle" >Checked order</text><path d="M604 719.3H786.6V878.4H587.6V736" fill="none" stroke="#f2b170" stroke-width="1.7" stroke-dasharray="16.5 8.5"/><circle cx="587.6" cy="719.3" r="11.8" fill="#ed9240"/><text x="587.60" y="724.50" font-size="13.5" fill="#fff" text-anchor="middle" >1</text><rect x="834.3" y="442.6" width="540.7" height="149.4" fill="none" stroke="#ed9240" stroke-width="3.8"/><rect x="834.3" y="442.6" width="540.7" height="149.4" fill="none" stroke="#f3bd84" stroke-width="1.6" stroke-dasharray="10 18"/><path d="M1390.6 442.4H1826M1390.6 591.9H1826" stroke="#f3b478" stroke-width="2" stroke-dasharray="15.5 8"/><path d="M832 573.8H843V583H852.2V593.5H832Z" fill="#e8903f"/><path d="M1357 444.8H1375.3V460.4H1366.2V451.7H1357Z" fill="#e8903f"/><path d="M1366.2 573.8H1384V582.7H1392.9V592H1357V582.7H1366.2Z" fill="#e8903f"/><circle cx="1375" cy="442.4" r="11.8" fill="#ed9240"/><text x="1375.00" y="446.50" font-size="11" fill="#fff" text-anchor="middle" >3</text><circle cx="834.2" cy="442.3" r="19.9" fill="#ed9240"/><path d="M834.2 427L840 433.5H836.6V439.9H843V436.5L849.5 442.3L843 448.1V444.7H836.6V451.1H840L834.2 457.6L828.4 451.1H831.8V444.7H825.4V448.1L818.9 442.3L825.4 436.5V439.9H831.8V433.5H828.4Z" fill="#fff"/></svg><div class="a" style="left:1826px;top:204px;width:23px;height:1278px;background:#efefef;"></div><div class="a" style="left:1830px;top:527px;width:14px;height:631px;background:#a6a6a6;"></div><div class="a" style="left:1848px;top:204px;width:2px;height:1278px;background:#a9a9a9;"></div><div class="a" style="left:570px;top:1460px;width:1256px;height:22px;background:#efefef;"></div><div class="a" style="left:977px;top:1464px;width:414px;height:14px;background:#a6a6a6;"></div><div class="a" style="left:1850px;top:204px;width:78px;height:1278px;background:#e5e5e5;"></div><div class="a" style="left:1928px;top:204px;width:2px;height:1278px;background:#d3d3d3;"></div><div class="a" style="left:1850px;top:448px;width:80px;height:20px;background:linear-gradient(rgba(0,0,0,0),rgba(0,0,0,0.05))"></div><div class="a" style="left:1850px;top:568px;width:80px;height:16px;background:linear-gradient(rgba(0,0,0,0.07),rgba(0,0,0,0))"></div><div class="a" style="left:1850px;top:468px;width:80px;height:100px;background:#efefef;"></div><svg class="a" style="left:1876px;top:220px;" width="32" height="32" viewBox="0 0 32 32"><path d="M4 4L15.5 15.8L4 27.5M17 4L28.5 15.8L17 27.5" fill="none" stroke="#78808b" stroke-width="4.2" stroke-linecap="round" stroke-linejoin="round"/></svg><svg class="a" style="left:1872px;top:292px;" width="36" height="44" viewBox="0 0 36 44"><path d="M6 2.2H23L32 11.5V36Q32 39.8 28.5 39.8H6Q2.2 39.8 2.2 36V6Q2.2 2.2 6 2.2Z" fill="none" stroke="#3f4551" stroke-width="4"/><path d="M21 2.5V11.8H31.5Z" fill="#3f4551"/><g stroke="#3f4551" stroke-width="2"><path d="M6 23H28M6 30.8H28"/></g><g fill="#3f4551"><circle cx="20.8" cy="23" r="3.1"/><circle cx="12.8" cy="30.8" r="3.1"/></g></svg><svg class="a" style="left:1868px;top:397px;" width="45" height="33" viewBox="0 0 45 33"><path d="M0.4 0.8H44V32.6H8V6.3Z" fill="#3f4551"/><g fill="#efefef"><path d="M15.5 8.5H23V15.5L20.5 21.8H17.8L19 15.5H15.5Z"/><path d="M27.5 8.5H35V15.5L32.5 21.8H29.8L31 15.5H27.5Z"/></g></svg><svg class="a" style="left:1869px;top:493px;" width="42" height="44" viewBox="0 0 42 44"><g fill="#3f4551"><rect x="18.6" y="0.7" width="4.4" height="5"/><path d="M0.6 4.8H41.2V35.2H0.6ZM5 13V30.7H37V13Z" fill-rule="evenodd"/><path d="M16.9 15L27 21L16.9 26.8Z"/><path d="M15.8 35H20L15.5 43H11.3Z"/><path d="M21.8 35H26L30.5 43H26.3Z"/></g></svg><svg class="a" style="left:1870px;top:594px;" width="40" height="40" viewBox="0 0 40 40"><circle cx="20" cy="20" r="15.6" fill="none" stroke="#3f4551" stroke-width="4.2"/><path d="M20 9.5V21.5L25 26" fill="none" stroke="#3f4551" stroke-width="4" stroke-linecap="round" stroke-linejoin="round"/></svg><svg class="a" style="left:1870px;top:692px;" width="40" height="42" viewBox="0 0 40 42"><g fill="none" stroke="#3f4551" stroke-width="3.8" stroke-linejoin="round"><path d="M20 3.5L36 12.3L20 21.1L4 12.3Z" fill="#e5e5e5"/><path d="M6.8 17.2L4 18.9L20 27.7L36 18.9L33.2 17.2"/><path d="M6.8 23.8L4 25.5L20 34.3L36 25.5L33.2 23.8"/></g></svg><svg class="a" style="left:1871px;top:793px;" width="38" height="43" viewBox="0 0 38 43"><path d="M2.5 2.5H27.5L35.5 10.5V38.8H2.5Z" fill="none" stroke="#3f4551" stroke-width="4.3"/><path d="M19 13.5Q26 21 26 25Q26 30 19 30Q12 30 12 25Q12 21 19 13.5Z" fill="#3f4551"/></svg><svg class="a" style="left:1869px;top:894px;" width="42" height="40" viewBox="0 0 42 40"><path d="M21 3.5Q39 3.5 39 16.5Q39 29.5 21 29.5Q15.5 29.5 11.5 28Q8 32 3.5 36.2Q6.5 29.5 5.8 25Q2.8 21.5 2.8 16.5Q2.8 3.5 21 3.5Z" fill="none" stroke="#3f4551" stroke-width="4" stroke-linejoin="round"/><g fill="#3f4551"><circle cx="13.5" cy="16.5" r="2.2"/><circle cx="21" cy="16.5" r="2.2"/><circle cx="28.5" cy="16.5" r="2.2"/></g></svg><svg class="a" style="left:1867px;top:991px;" width="46" height="46" viewBox="0 0 46 46"><ellipse cx="19" cy="6.5" rx="18.2" ry="5.8" fill="#3f4551"/><g fill="none" stroke="#3f4551"><path d="M2.9 6.5V28Q3 35 16.8 37" stroke-width="3.8"/><path d="M35 6.5V13.5" stroke-width="3.8"/><path d="M4.8 14.5Q10 19.5 19 19.5Q28 19.5 32.2 16.2" stroke-width="1.9"/><path d="M4.8 23.5Q10 27.8 21.8 27.8" stroke-width="1.9"/></g><g transform="translate(31.5 30.5) rotate(-47)"><rect x="-16" y="-4.6" width="17.5" height="9.2" rx="4.6" fill="none" stroke="#e5e5e5" stroke-width="7.5"/><rect x="-16" y="-4.6" width="17.5" height="9.2" rx="4.6" fill="none" stroke="#3f4551" stroke-width="3.6"/><rect x="-1.5" y="-4.6" width="17.5" height="9.2" rx="4.6" fill="none" stroke="#e5e5e5" stroke-width="7.5"/><rect x="-1.5" y="-4.6" width="17.5" height="9.2" rx="4.6" fill="none" stroke="#3f4551" stroke-width="3.6"/></g></svg><svg class="a" style="left:1868px;top:1092px;" width="45" height="45" viewBox="0 0 45 45"><g fill="#3f4551"><path d="M10 1L12.5 8.5L20 11L12.5 13.5L10 21L7.5 13.5L0 11L7.5 8.5Z"/><path d="M24.5 3L26 7L30 8.5L26 10L24.5 14L23 10L19 8.5L23 7Z"/><path d="M36 15L37.3 18.3L40.5 19.5L37.3 20.7L36 24L34.7 20.7L31.5 19.5L34.7 18.3Z"/><path d="M9 27L10.3 30.5L14 31.8L10.3 33L9 36.5L7.7 33L4 31.8L7.7 30.5Z"/><path d="M17 19Q20 16 23 19L42.5 38.5Q44.5 41 42 43Q39.5 45 37 42.5L17.5 23.5Q15 21.5 17 19Z"/></g><path d="M19.8 20.5L25.2 25.7" stroke="#e5e5e5" stroke-width="1.8" stroke-linecap="round"/></svg><div class="a" style="left:1930px;top:204px;width:494px;height:1278px;background:#efefef;"></div><div class="a" style="left:1930px;top:204px;width:494px;height:64px;background:#78808b;"></div><div class="t" style="left:1960.08px;top:222.04px;font-size:28.30px;color:#fff;font-weight:bold;transform:scaleX(0.8493);">Slides</div><svg class="a" style="left:1962px;top:288px;" width="40" height="40" viewBox="0 0 40 40"><circle cx="20" cy="20" r="16.1" fill="none" stroke="#78808b" stroke-width="3.5"/><path d="M20 12V28M12 20H28" stroke="#78808b" stroke-width="3.6"/></svg><div class="t" style="left:2013.91px;top:294.60px;font-size:27.40px;color:#4d4d4d;transform:scaleX(0.9658);">Slide</div><svg class="a" style="left:2358px;top:288px;" width="40" height="40" viewBox="0 0 40 40"><g transform="translate(20,20)" fill="#78808b"><rect x="-4.0" y="-17.8" width="8" height="35.6" rx="1" transform="rotate(90.0)"/><rect x="-4.0" y="-17.8" width="8" height="35.6" rx="1" transform="rotate(150.0)"/><rect x="-4.0" y="-17.8" width="8" height="35.6" rx="1" transform="rotate(210.0)"/><circle r="12.6"/><circle r="5" fill="#efefef"/></g></svg><div class="a" style="left:1930px;top:346px;width:494px;height:2px;background:#d2d2d2;"></div><div class="t" style="left:1993.33px;top:383.89px;font-size:26.00px;color:#555;transform:scaleX(1.0080);">1</div><div class="t" style="left:1992.20px;top:619.49px;font-size:26.00px;color:#555;">2</div><div class="t" style="left:1992.46px;top:855.49px;font-size:26.00px;color:#555;">3</div><div class="a" style="left:1930px;top:1277px;width:494px;height:2px;background:#d2d2d2;"></div><div class="a" style="left:2076px;top:1310px;width:208px;height:56px;background:#79808b;border-radius:7px"></div><svg class="a" style="left:2117px;top:1326px;" width="22" height="24" viewBox="0 0 22 24"><path d="M0.7 0.5L20.8 12L0.7 23.7Z" fill="#fff"/></svg><div class="t" style="left:2162.20px;top:1325.33px;font-size:26.30px;color:#fff;transform:scaleX(0.9958);">Present</div><div class="a" style="left:1998px;top:1396px;width:364px;height:56px;background:#ecc246;border-radius:8px"></div><svg class="a" style="left:2030px;top:1410px;" width="28" height="28" viewBox="0 0 28 28"><rect x="0" y="0" width="28" height="28" rx="2.5" fill="#fff"/><rect x="4" y="8" width="20" height="12" fill="#ecc246"/></svg><div class="t" style="left:2076.85px;top:1409.17px;font-size:28.50px;color:#555;transform:scaleX(0.8966);">Send to Google Slides</div><svg class="a" style="left:1930px;top:348px" width="494" height="760" viewBox="1930 348 494 760" font-family="Liberation Sans"><defs><clipPath id="c1"><rect x="2028.5" y="378.2" width="303.4" height="227.4" rx="10"/></clipPath><clipPath id="c2"><rect x="2028.5" y="614.7" width="303" height="226.5" rx="10"/></clipPath><clipPath id="c3"><rect x="2028.5" y="850.6" width="302.8" height="226.4" rx="10"/></clipPath></defs><g clip-path="url(#c1)"><rect x="2028" y="378" width="304" height="228" fill="#efefef"/><rect x="2040" y="380" width="280" height="223.4" fill="#fff"/><path d="M2174.5 380V475M2174.5 553.4V603.4M2234.5 553.4V603.4M2275.6 514.3H2320" stroke="#333" stroke-width="1.8"/><rect x="2105" y="437" width="139" height="19" fill="#fff"/><text x="2174.4" y="451" font-size="14.9" fill="#666" text-anchor="middle">Reservation request</text><rect x="2073.4" y="475" width="202.2" height="78.4" fill="#a6a7ab" stroke="#777" stroke-width="1.8"/><text x="2168.2" y="508.7" font-size="17.6" fill="#fff" text-anchor="middle">Car rental</text><text x="2174.7" y="529.4" font-size="17.6" fill="#fff" text-anchor="middle">customer</text><path d="M2275.6 514.3L2293.4 508.69999999999993L2293.4 519.9Z" fill="#333"/><path d="M2174.5 553.4L2168.9 571.1999999999999L2180.1 571.1999999999999Z" fill="#333"/><path d="M2040 380V603.4H2320V380Z" fill="none" stroke="#f2b170" stroke-width="1.6" stroke-dasharray="12 7"/><clipPath id="w1"><rect x="2040" y="380" width="280" height="223.4"/></clipPath><circle cx="2040" cy="380" r="17" fill="#ed9240" clip-path="url(#w1)"/></g><rect x="2028.5" y="378.2" width="303.4" height="227.4" rx="10" fill="none" stroke="#9b9b9b" stroke-width="2.2"/><rect x="2028.5" y="614.7" width="303" height="226.5" rx="10" fill="none" stroke="#ed9240" stroke-width="7" opacity="0.25" filter="url(#bl)"/><defs><filter id="bl" x="-10%" y="-10%" width="120%" height="120%"><feGaussianBlur stdDeviation="3"/></filter></defs><g clip-path="url(#c2)"><rect x="2028" y="614" width="304" height="228" fill="#efefef"/><rect x="2030" y="686" width="299.6" height="83.7" fill="#fff"/><path d="M2030 730.5H2054.3M2141.9 730.5H2213M2317.7 730.5H2329.6" stroke="#555" stroke-width="0.9"/><rect x="2158" y="726" width="39" height="8" fill="#fff"/><text x="2177.5" y="732.6" font-size="6" fill="#555" text-anchor="middle">Order request</text><path d="M2054.3 730.5L2047.3000000000002 727.7L2047.3000000000002 733.3Z" fill="#333"/><path d="M2213 730.5L2206 727.7L2206 733.3Z" fill="#333"/><rect x="2054.3" y="707.2" width="87.6" height="46.9" rx="5" fill="#7fb0f8" stroke="#6f8fbf" stroke-width="0.8"/><path d="M2054.3 728.5H2141.9" stroke="#5f7fae" stroke-width="0.8"/><text x="2095.5" y="721" font-size="6.8" fill="#fff" text-anchor="middle">1.0</text><text x="2095.5" y="740.5" font-size="6.8" fill="#fff" text-anchor="middle">Create order for</text><text x="2098" y="748.5" font-size="6.8" fill="#fff" text-anchor="middle">vendor</text><rect x="2213" y="716.8" width="104.7" height="27.4" fill="#efefef"/><path d="M2317.7 716.8H2213V744.2H2317.7M2234.2 716.8V744.2" fill="none" stroke="#999" stroke-width="0.9"/><text x="2221" y="733" font-size="6.8" fill="#555">D</text><text x="2273" y="733" font-size="6.8" fill="#555" text-anchor="middle">Request queue</text><path d="M2031 686V769.7H2328.6V686Z" fill="none" stroke="#f2b170" stroke-width="1.3" stroke-dasharray="8 5"/><clipPath id="w2"><rect x="2030" y="686" width="299.6" height="83.7"/></clipPath><g clip-path="url(#w2)"><circle cx="2032" cy="686" r="6" fill="#ed9240"/><circle cx="2327.6" cy="686" r="6" fill="#ed9240"/></g></g><rect x="2028.5" y="614.7" width="303" height="226.5" rx="10" fill="none" stroke="#ed9240" stroke-width="3.2"/><g clip-path="url(#c3)"><rect x="2028" y="850" width="304" height="228" fill="#efefef"/><rect x="2030" y="918.1" width="299.3" height="91.5" fill="#fff"/><path d="M2030 966.2H2098.4M2194.5 966.2H2311.5Q2318.7 966.2 2318.7 973.4V1009.6" fill="none" stroke="#555" stroke-width="0.9"/><rect x="2036" y="961.5" width="46" height="8" fill="#fff"/><text x="2059.3" y="968.3" font-size="6" fill="#444" text-anchor="middle">Sorted request</text><rect x="2223" y="961.5" width="53" height="8" fill="#fff"/><text x="2249.8" y="968.3" font-size="6" fill="#666" text-anchor="middle">Assigned request</text><path d="M2098.4 966.2L2091.4 963.4000000000001L2091.4 969.0Z" fill="#333"/><rect x="2098.4" y="941.3" width="96.1" height="51.5" rx="5" fill="#7fb0f8" stroke="#6f8fbf" stroke-width="0.8"/><path d="M2098.4 965H2194.5" stroke="#5f7fae" stroke-width="0.8"/><text x="2143" y="956.5" font-size="6.8" fill="#fff" text-anchor="middle">1.1</text><text x="2143.5" y="977.5" font-size="6.8" fill="#fff" text-anchor="middle">Assign order to</text><text x="2146.5" y="986.5" font-size="6.8" fill="#fff" text-anchor="middle">specific vendor</text><path d="M2031 918.1V1009.6H2328.3V918.1Z" fill="none" stroke="#f2b170" stroke-width="1.3" stroke-dasharray="8 5"/><clipPath id="w3"><rect x="2030" y="918.1" width="299.3" height="91.5"/></clipPath><circle cx="2032" cy="918.1" r="6" fill="#ed9240" clip-path="url(#w3)"/></g><rect x="2028.5" y="850.6" width="302.8" height="226.4" rx="10" fill="none" stroke="#9b9b9b" stroke-width="2.2"/></svg><div class="a" style="left:0px;top:1482px;width:2424px;height:58px;background:#79808b;"></div><svg class="a" style="left:200px;top:1495px;" width="48" height="40" viewBox="0 0 48 40"><g fill="#fff"><rect x="3.8" y="3" width="6.5" height="5.5" rx="2"/><rect x="14.5" y="3" width="29.5" height="5.5" rx="2.5"/><rect x="3.8" y="17" width="6.5" height="5.5" rx="2"/><rect x="14.5" y="17" width="29.5" height="5.5" rx="2.5"/><rect x="3.8" y="31" width="6.5" height="5.5" rx="2"/><rect x="14.5" y="31" width="29.5" height="5.5" rx="2.5"/></g></svg><svg class="a" style="left:280px;top:1496px;" width="37" height="37" viewBox="0 0 37 37"><g fill="#fff"><rect x="0" y="0" width="16" height="16" rx="1.5"/><rect x="20" y="0" width="16" height="16" rx="1.5"/><rect x="0" y="19.8" width="16" height="16" rx="1.5"/><rect x="20" y="19.8" width="16" height="16" rx="1.5"/></g></svg><div class="a" style="left:344px;top:1482px;width:366px;height:56px;background:#3f4551;border-radius:0 0 8px 8px"></div><div class="t" style="left:363.01px;top:1496.32px;font-size:27.50px;color:#fff;transform:scaleX(0.9516);">Data Flow Diagram (Ph...</div><svg class="a" style="left:674px;top:1504px;" width="16" height="12" viewBox="0 0 16 12"><path d="M0.5 0.2H15.2L7.85 11.8Z" fill="#fff"/></svg><svg class="a" style="left:736px;top:1494px;" width="40" height="40" viewBox="0 0 40 40"><circle cx="19.5" cy="19.8" r="16.6" fill="none" stroke="#fff" stroke-width="3.6"/><path d="M19.5 11.5V28M11.2 19.8H27.8" stroke="#fff" stroke-width="3.8"/></svg><div class="a" style="left:1836px;top:1492px;width:2px;height:45px;background:#3f4551;"></div><svg class="a" style="left:1860px;top:1494px;" width="40" height="40" viewBox="0 0 40 40"><circle cx="20" cy="20" r="16.8" fill="none" stroke="#fff" stroke-width="3.5"/><path d="M20 8.5L28.5 30L20 25.5L11.5 30Z" fill="#fff"/></svg><div class="a" style="left:1930px;top:1512px;width:28px;height:4px;background:#fff;"></div><div class="a" style="left:1982px;top:1510px;width:278px;height:8px;background:#adadad;border-radius:4px"></div><div class="a" style="left:2047.6px;top:1502px;width:24px;height:24px;border-radius:50%;background:#5b9cf6"></div><svg class="a" style="left:2284px;top:1500px;" width="29" height="29" viewBox="0 0 29 29"><path d="M14.2 0.5V28.5M0.5 14.3H28.3" stroke="#fff" stroke-width="3.8"/></svg><div class="t" style="left:2325.46px;top:1500.47px;font-size:27.20px;color:#fff;transform:scaleX(0.9886);">40%</div><svg class="a" style="left:2391px;top:1508px;" width="15" height="12" viewBox="0 0 15 12"><path d="M0.3 0.4H14.7L7.5 11.6Z" fill="#fff"/></svg></body></html>
